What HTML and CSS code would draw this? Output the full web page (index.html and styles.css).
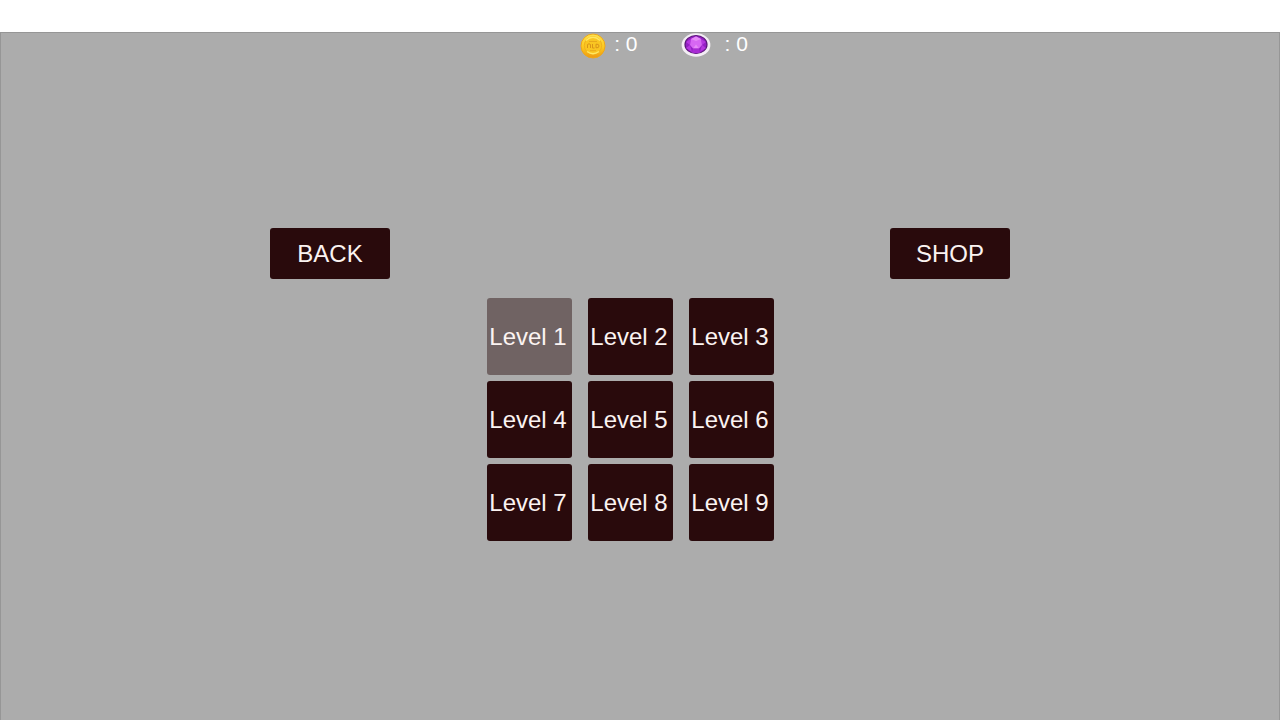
FILE: index.html
```html
<!DOCTYPE html>
<html lang="en">
<head>
<meta charset="utf-8">
<meta name="viewport" content="width=device-width, initial-scale=1">
<title>Level select</title>
<link rel="stylesheet" href="styles.css">
</head>
<body>
<main class="game">
  <header class="wallet">
    <div class="wallet-item">
      <svg class="coin" viewBox="0 0 26 26" aria-hidden="true">
        <defs>
          <linearGradient id="gold" x1="0" y1="0" x2="0" y2="1">
            <stop offset="0" stop-color="#ffe44d"/>
            <stop offset=".55" stop-color="#fcc81e"/>
            <stop offset="1" stop-color="#ee9812"/>
          </linearGradient>
        </defs>
        <circle cx="13" cy="13" r="12" fill="url(#gold)" stroke="#eda71b" stroke-width="1"/>
        <circle cx="13" cy="12.5" r="8.7" fill="#f9c522" stroke="#efb01e" stroke-width="1"/>
        <path d="M6 7.5Q13 1 20 7.5M7 18.5Q13 23 19 18.5" fill="none" stroke="#ffe763" stroke-width="1.3"/>
        <path d="M7.500 15v-3.500q1.500-1.500 3 0V15M12.500 11v4h2M16 11.200v3.600q3 .4 3-1.800t-3-1.800" fill="none" stroke="#d99418" stroke-width="1"/>
        <path d="M9 8.500h8M10 17.700h6" fill="none" stroke="#e8a91c" stroke-width="1"/>
      </svg>
      <span class="amount">: 0</span>
    </div>
    <div class="wallet-item">
      <svg class="gem" viewBox="0 0 30 24" aria-hidden="true">
        <ellipse cx="15" cy="12" rx="14.400" ry="11.800" fill="#f3edf4"/>
        <ellipse cx="15" cy="11.500" rx="11" ry="9" fill="#9420c4" stroke="#5c167b" stroke-width="1.2"/>
        <path d="M5 9 10 6l-1 6zM25 9l-5-3 1 6zM9 12l-4 3 6 4zM21 12l4 3-6 4z" fill="#b536df"/>
        <path d="M10 6l5-2.500L20 6l1 6-3 3.500h-6L9 12z" fill="#d767f3"/>
        <path d="M10 6l5 2 5-2-5-2.500zM12 15.500l3-4 3 4z" fill="#e68bf7"/>
        <path d="M12 15.500h6l1 4q-4 1.500-8 0z" fill="#a82bd4"/>
      </svg>
      <span class="amount">: 0</span>
    </div>
  </header>
  <nav class="actions">
    <button class="button action" type="button">BACK</button>
    <button class="button action" type="button">SHOP</button>
  </nav>
  <section class="levels" aria-label="Levels">
    <button class="button level level-current" type="button">Level 1</button>
    <button class="button level" type="button">Level 2</button>
    <button class="button level" type="button">Level 3</button>
    <button class="button level" type="button">Level 4</button>
    <button class="button level" type="button">Level 5</button>
    <button class="button level" type="button">Level 6</button>
    <button class="button level" type="button">Level 7</button>
    <button class="button level" type="button">Level 8</button>
    <button class="button level" type="button">Level 9</button>
  </section>
</main>
</body>
</html>
```
FILE: styles.css
```css
* {
  box-sizing: border-box;
}

body {
  margin: 0;
  min-height: 100vh;
  padding-top: 32px;
  display: flex;
  flex-direction: column;
  background: #fff;
  font-family: "Liberation Sans", Arial, sans-serif;
}

.game {
  flex: 1;
  background: #acacac;
  border: 1px solid #969696;
  border-bottom: 0;
}

.wallet {
  display: flex;
  justify-content: center;
  gap: 43px;
  padding-left: 48px;
}

.wallet-item {
  display: flex;
  align-items: flex-start;
  gap: 8px;
}

.coin {
  width: 26px;
  height: 26px;
}

.gem {
  width: 30px;
  height: 24px;
}

.wallet-item .gem + .amount {
  padding-left: 6px;
}

.amount {
  color: #fff;
  font-size: 21px;
  line-height: 22px;
}

.actions {
  display: flex;
  justify-content: space-between;
  max-width: 740px;
  margin: 169px auto 0;
}

.button {
  padding: 0;
  border: 0;
  border-radius: 3px;
  background: #290a0c;
  color: #fbf3f1;
  font-family: inherit;
  font-size: 24px;
  cursor: pointer;
}

.action {
  width: 120px;
  height: 51px;
}

.levels {
  display: grid;
  grid-template-columns: repeat(3, 85px);
  grid-auto-rows: 77px;
  justify-content: center;
  gap: 6px 16px;
  margin-top: 19px;
  padding: 0 20px 24px 0;
}

.level {
  padding-right: 2px;
  white-space: nowrap;
}

.level-current {
  background: #706363;
}
```
